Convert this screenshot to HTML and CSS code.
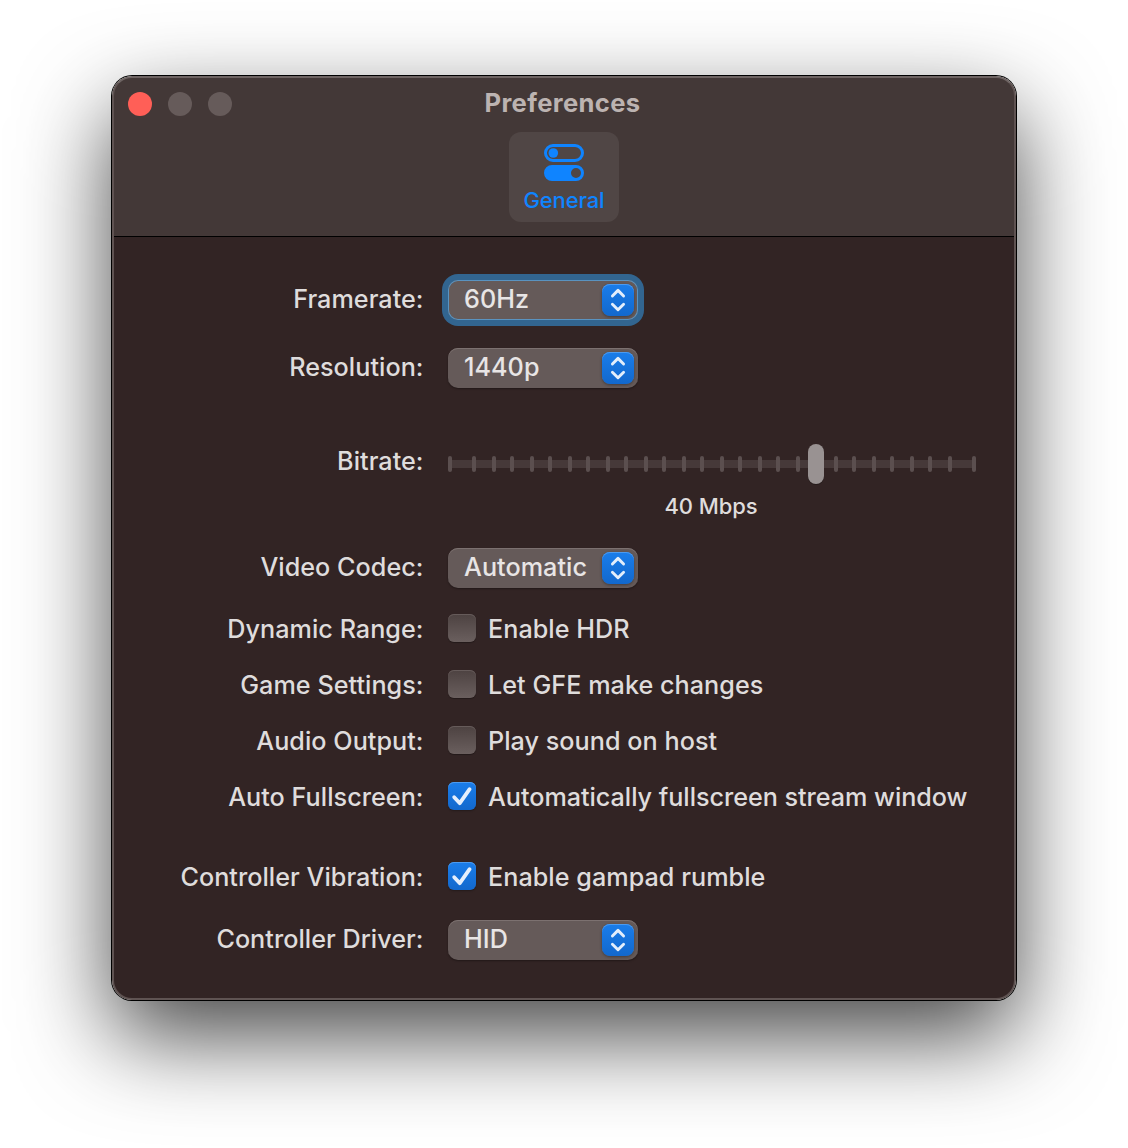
FILE: index.html
```html
<!DOCTYPE html>
<html lang="en">
<head>
<meta charset="utf-8">
<title>Preferences</title>
<link rel="stylesheet" href="styles.css">
</head>
<body>
<svg class="defs" width="0" height="0">
  <defs>
    <symbol id="stepper" viewBox="0 0 32 32"><path d="M10.4 12 16 6.4l5.6 5.6M10.4 20.2l5.6 5.6 5.6-5.6" fill="none" stroke="#e3eefb" stroke-width="2.9" stroke-linecap="round" stroke-linejoin="round"/></symbol>
    <symbol id="check" viewBox="0 0 28 28"><path d="M6.2 15.2 11.8 21.2 21.6 7.2" fill="none" stroke="#e5effc" stroke-width="3.8" stroke-linecap="round" stroke-linejoin="round"/></symbol>
  </defs>
</svg>
<main class="window">
  <header class="toolbar">
    <div class="titlebar">
      <div class="lights"><span class="light close"></span><span class="light"></span><span class="light"></span></div>
      <h1 class="title">Preferences</h1>
    </div>
    <button class="tab">
      <svg width="40" height="38" viewBox="0 0 40 38">
        <rect x="1.5" y="1.5" width="37" height="15" rx="7.5" fill="none" stroke="#0f84ff" stroke-width="3"/>
        <circle cx="9.3" cy="9" r="4.8" fill="#0f84ff"/>
        <path fill="#0f84ff" fill-rule="evenodd" d="M8 21h24a8 8 0 0 1 0 16H8a8 8 0 0 1 0-16zM32 24a5 5 0 1 0 0 10 5 5 0 0 0 0-10z"/>
      </svg>
      <span class="tab-name">General</span>
    </button>
  </header>
  <section class="form">
    <div class="row">
      <label class="label">Framerate:</label>
      <div class="select focused"><span>60Hz</span><svg class="stepper"><use href="#stepper"/></svg></div>
    </div>
    <div class="row resolution">
      <label class="label">Resolution:</label>
      <div class="select"><span>1440p</span><svg class="stepper"><use href="#stepper"/></svg></div>
    </div>
    <div class="row bitrate">
      <label class="label">Bitrate:</label>
      <div class="slider">
        <svg width="528" height="42" viewBox="0 0 528 42">
          <path d="M2 20H526" stroke="#463939" stroke-width="8"/>
          <path d="M2 14v12M26 14v12M46 14v12M64 14v12M84 14v12M102 14v12M122 14v12M140 14v12M160 14v12M178 14v12M198 14v12M216 14v12M236 14v12M254 14v12M274 14v12M292 14v12M312 14v12M330 14v12M350 14v12M388 14v12M406 14v12M426 14v12M444 14v12M464 14v12M482 14v12M502 14v12M526 14v12" stroke="#5b4f4f" stroke-width="4" stroke-linecap="round"/>
          <rect x="360" y="1" width="16" height="40" rx="8" fill="#000" opacity=".25"/>
          <rect x="360" y="0" width="16" height="40" rx="8" fill="#999292"/>
        </svg>
        <span class="rate">40 Mbps</span>
      </div>
    </div>
    <div class="row codec">
      <label class="label">Video Codec:</label>
      <div class="select"><span>Automatic</span><svg class="stepper"><use href="#stepper"/></svg></div>
    </div>
    <div class="row option range">
      <label class="label">Dynamic Range:</label>
      <div class="choice"><span class="box"></span><span>Enable HDR</span></div>
    </div>
    <div class="row option">
      <label class="label">Game Settings:</label>
      <div class="choice"><span class="box"></span><span>Let GFE make changes</span></div>
    </div>
    <div class="row option">
      <label class="label">Audio Output:</label>
      <div class="choice"><span class="box"></span><span>Play sound on host</span></div>
    </div>
    <div class="row option">
      <label class="label">Auto Fullscreen:</label>
      <div class="choice"><span class="box checked"><svg width="28" height="28"><use href="#check"/></svg></span><span class="long">Automatically fullscreen stream window</span></div>
    </div>
    <div class="row option vibration">
      <label class="label">Controller Vibration:</label>
      <div class="choice"><span class="box checked"><svg width="28" height="28"><use href="#check"/></svg></span><span>Enable gampad rumble</span></div>
    </div>
    <div class="row driver">
      <label class="label">Controller Driver:</label>
      <div class="select"><span>HID</span><svg class="stepper"><use href="#stepper"/></svg></div>
    </div>
  </section>
</main>
</body>
</html>
```
FILE: styles.css
```css
* { box-sizing: border-box; }
html, body { margin: 0; height: 100%; overflow: hidden; background: #fff; }
body {
  padding: 76px 112px;
  font-family: Inter, "Liberation Sans", sans-serif;
  font-size: 25.2px;
  font-weight: 500;
  letter-spacing: 0.03px;
  color: #dfdcdc;
}
.defs { display: block; }
.window {
  width: 904px;
  height: 924px;
  border-radius: 20px;
  background: linear-gradient(#433837 0 160px, #000 160px 161px, #322424 161px);
  border: 2px solid #5f5352;
  border-top-color: #6e6463;
  background-origin: border-box;
  box-shadow: 0 0 0 1px #000, 0 36px 92px rgba(0, 0, 0, .73);
}
.toolbar {
  height: 159px;
  display: flex;
  flex-direction: column;
  align-items: center;
}
.titlebar {
  display: grid;
  grid-template-columns: 200px 1fr 200px;
  align-items: center;
  width: 100%;
  height: 54px;
  padding-bottom: 2px;
}
.lights { display: flex; gap: 16px; padding-left: 14px; }
.light { width: 24px; height: 24px; border-radius: 50%; background: #665b5a; }
.close { background: #ff5f57; }
.title {
  margin: 0;
  padding-right: 3px;
  padding-bottom: 4px;
  text-align: center;
  font-size: 25.6px;
  font-weight: 700;
  letter-spacing: 0.35px;
  color: #bcb3b1;
}
.tab {
  display: flex;
  flex-direction: column;
  align-items: center;
  width: 110px;
  height: 90px;
  padding: 12px 0 0;
  border: 0;
  border-radius: 12px;
  background: #504645;
  font: 500 22px/26px Inter, "Liberation Sans", sans-serif;
  letter-spacing: -0.15px;
  color: #0f84ff;
}
.tab-name { margin-top: 5px; white-space: nowrap; }
.form { padding-top: 43px; }
.row {
  display: grid;
  grid-template-columns: 309.5px 528px;
  column-gap: 24.5px;
  height: 40px;
  line-height: 40px;
  white-space: nowrap;
}
.label { margin-top: -1px; text-align: right; }
.select {
  display: flex;
  justify-content: space-between;
  align-items: center;
  width: 190px;
  height: 40px;
  padding: 0 4px 0 16px;
  border-radius: 10px;
  background: #655a59;
  box-shadow: inset 0 1px #7c7170, 0 1px 2px rgba(0, 0, 0, .35);
  color: #e8e5e5;
}
.select span { margin-top: -3px; }
.focused { box-shadow: inset 0 0 0 1px #5a93c0, 0 0 0 6px #326590; }
.stepper {
  width: 32px;
  height: 32px;
  border-radius: 8px;
  background: linear-gradient(#1a7dea, #1268cd);
  box-shadow: inset 0 1px #4c9bf0, 0 1px 3px rgba(0, 0, 0, .35);
}
.resolution { margin-top: 28px; }
.bitrate { margin-top: 56px; height: 76px; }
.bitrate .label { margin-top: -3px; }
.slider { display: flex; flex-direction: column; align-items: center; }
.slider svg { display: block; }
.rate { padding-right: 2px; font-size: 22px; line-height: 40px; letter-spacing: -0.1px; }
.codec { margin-top: 28px; }
.option { height: 28px; line-height: 28px; margin-top: 28px; }
.option .label { margin-top: 1px; }
.range { margin-top: 26px; }
.vibration { margin-top: 52px; }
.driver { margin-top: 30px; }
.choice { display: flex; gap: 12px; }
.choice > span:last-child { margin-top: 1px; }
.long { letter-spacing: -0.04px; }
.box {
  width: 28px;
  height: 28px;
  border-radius: 6px;
  background: linear-gradient(#4d4241, #6a5f5e);
  box-shadow: inset 0 1px #665b5a, 0 1px 1px rgba(0, 0, 0, .3);
}
.box svg { display: block; }
.checked { background: linear-gradient(#1a7dea, #1268cd); box-shadow: inset 0 1px #4c9bf0, 0 1px 2px rgba(0, 0, 0, .3); }
```
